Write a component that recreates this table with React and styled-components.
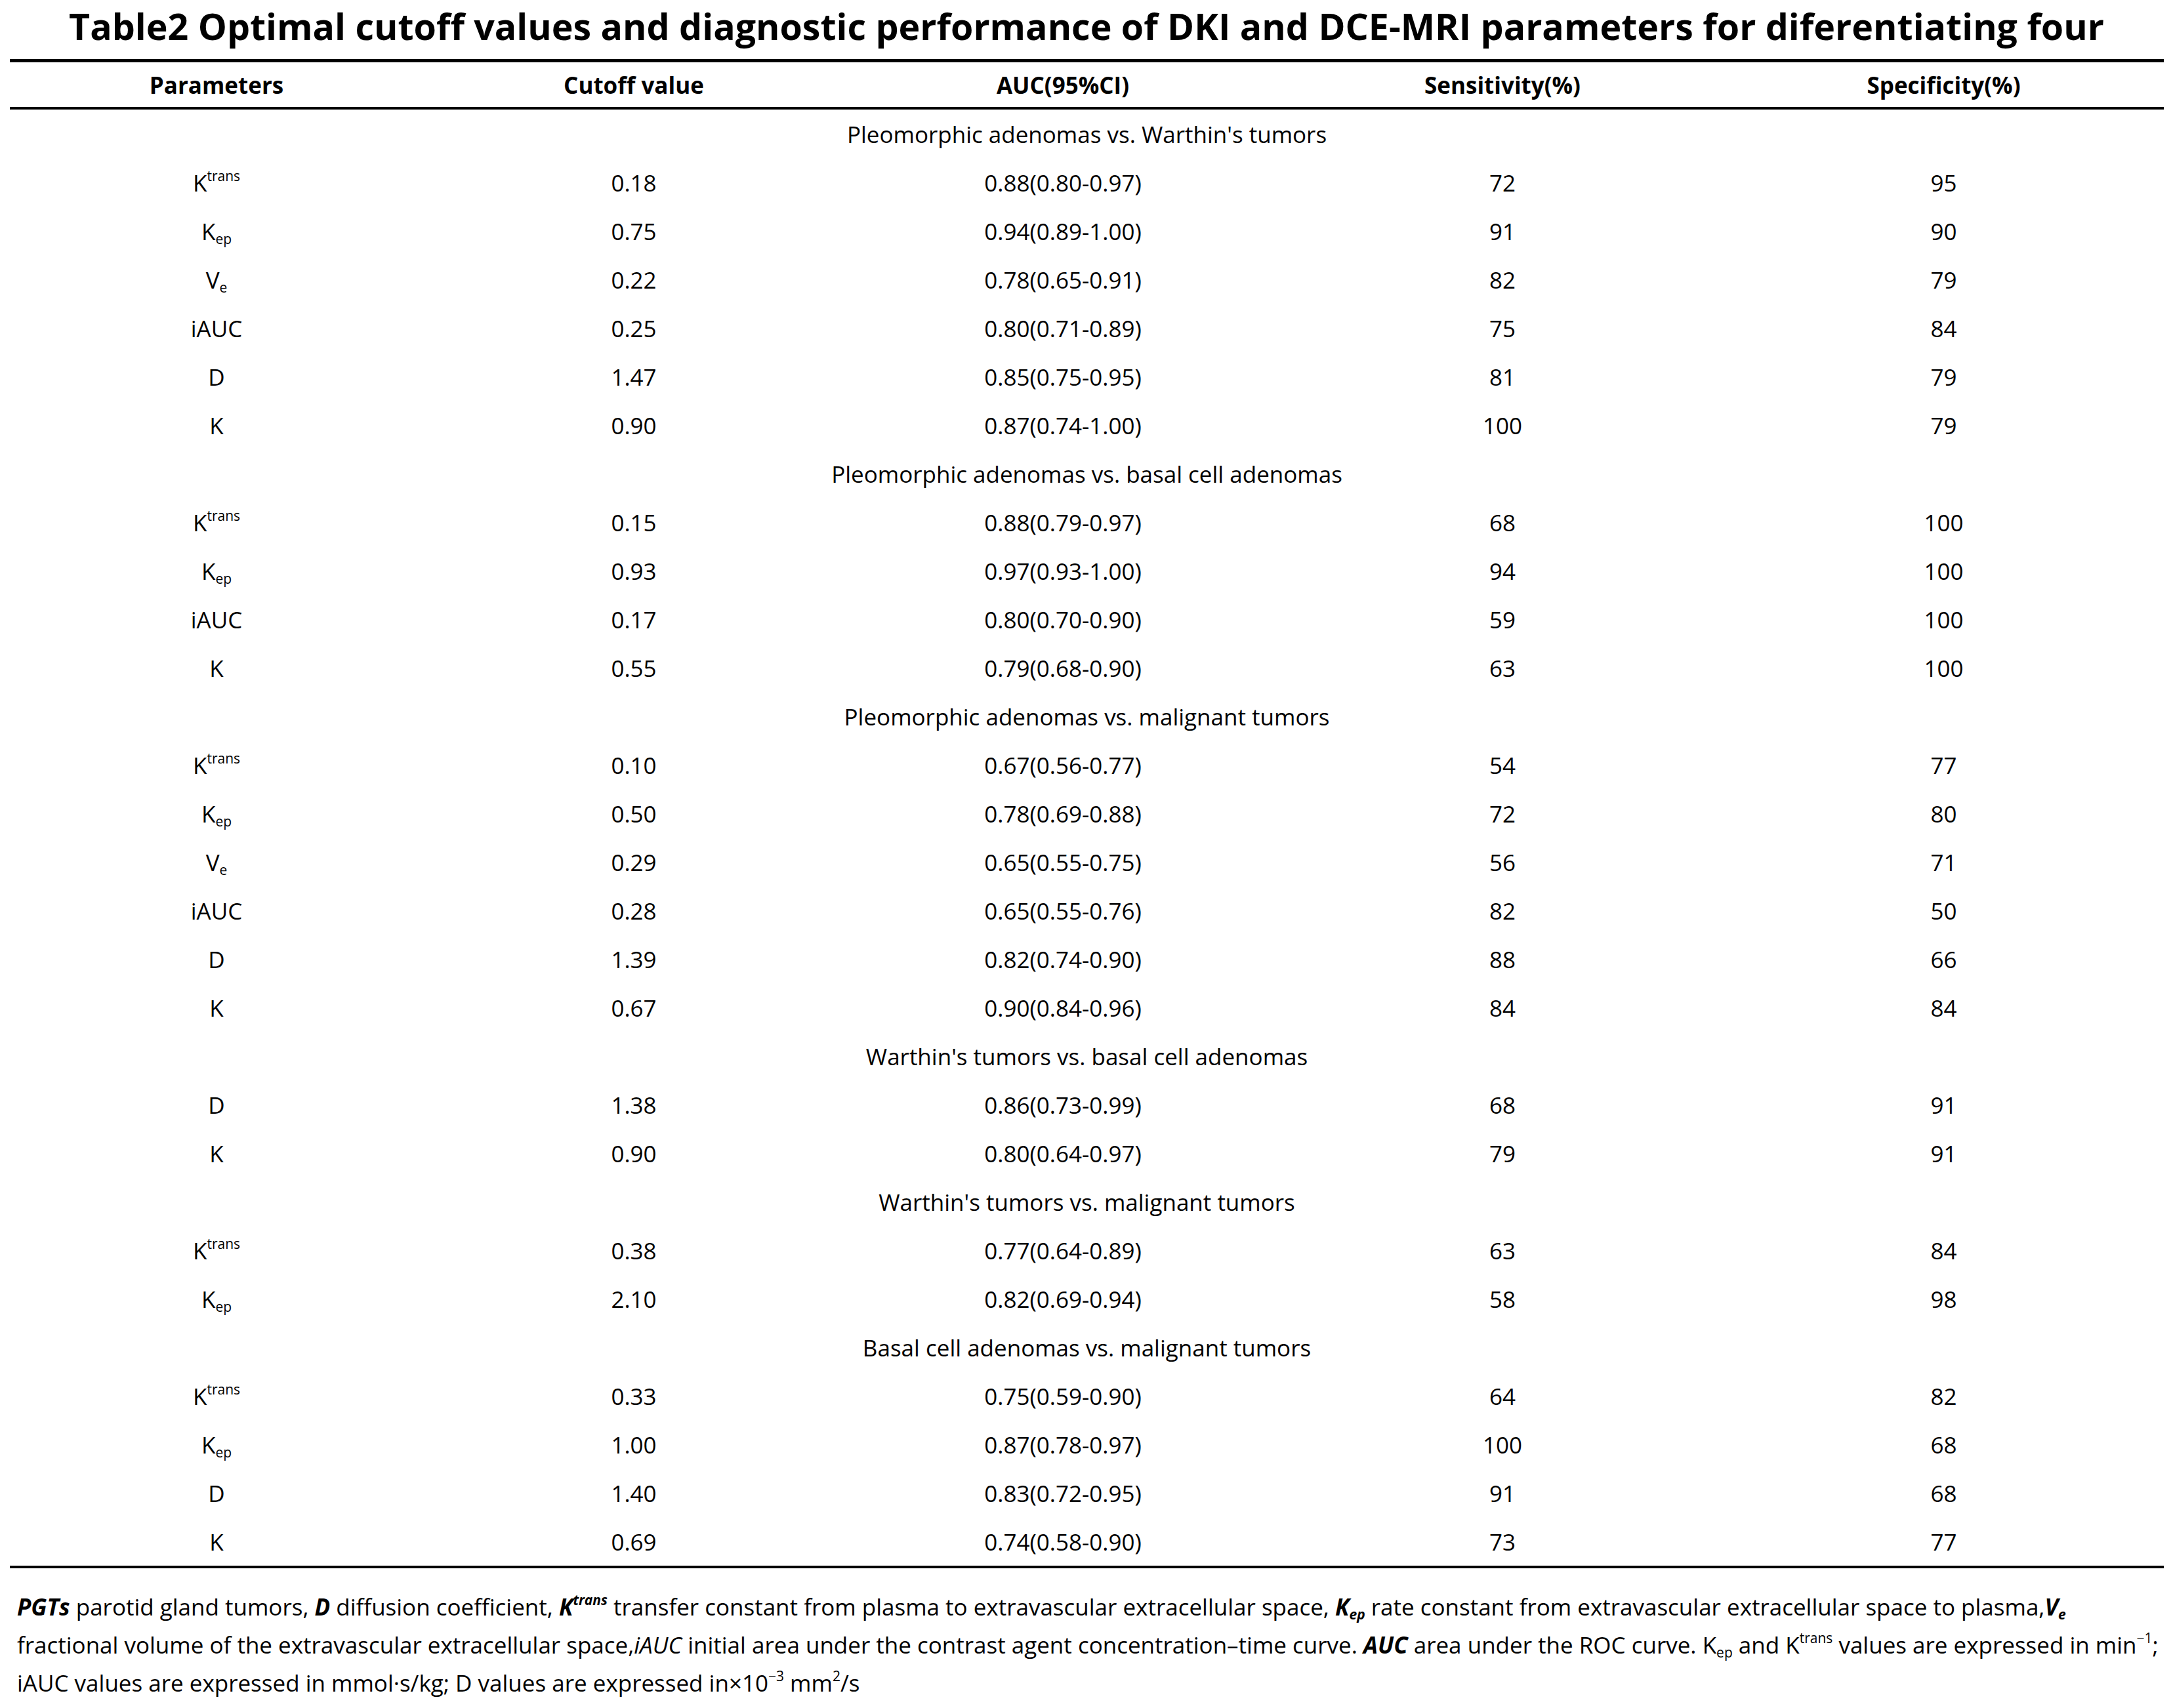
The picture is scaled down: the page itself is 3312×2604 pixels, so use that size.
import React from "react";
import styled, { createGlobalStyle } from "styled-components";

const GlobalStyle = createGlobalStyle`
  html, body {
    margin: 0;
    padding: 0;
    background: #fff;
  }
  body {
    font-family: "Open Sans", "Noto Sans", "Liberation Sans", sans-serif;
    color: #000;
  }
`;

const Page = styled.div`
  width: 3312px;
  min-height: 2604px;
  background: #fff;
`;

const Title = styled.h1`
  margin: 0;
  padding-bottom: 10px;
  font-size: 55.5px;
  line-height: 80px;
  font-weight: 700;
  text-align: center;
  white-space: nowrap;
`;

const Table = styled.div`
  margin-left: 15px;
  width: 3283px;
  display: grid;
  grid-template-columns: 630px 642px 666px 674px 671px;
  border-top: 5px solid #000;
  border-bottom: 4px solid #000;
  font-size: 35px;
`;

const HeadCell = styled.div`
  height: 72px;
  box-sizing: border-box;
  border-bottom: 4px solid #000;
  display: flex;
  align-items: center;
  justify-content: center;
  font-weight: 700;
`;

const Cell = styled.div`
  height: 74px;
  display: flex;
  align-items: center;
  justify-content: center;
  white-space: nowrap;
`;

const SectionCell = styled(Cell)`
  grid-column: 1 / -1;
`;

const Label = styled.span`
  display: inline-block;
`;

const Sup = styled.span`
  font-size: ${(p) => p.$size || 21}px;
  vertical-align: ${(p) => p.$rise || 16}px;
  line-height: 0;
`;

const Sub = styled.span`
  font-size: ${(p) => p.$size || 21}px;
  vertical-align: ${(p) => p.$drop || -6}px;
  line-height: 0;
`;

const Footnote = styled.div`
  margin: 30px 0 0 26px;
  font-size: 35px;
  line-height: 58px;
`;

const NoteLine = styled.div`
  white-space: nowrap;
`;

const Term = styled.b`
  font-weight: 700;
  font-style: italic;
`;

const Em = styled.i`
  font-style: italic;
`;

const params = {
  Ktrans: (
    <>
      K<Sup>trans</Sup>
    </>
  ),
  Kep: (
    <>
      K<Sub>ep</Sub>
    </>
  ),
  Ve: (
    <>
      V<Sub>e</Sub>
    </>
  ),
  iAUC: "iAUC",
  D: "D",
  K: "K",
};

const sections = [
  {
    title: "Pleomorphic adenomas vs. Warthin's tumors",
    rows: [
      ["Ktrans", "0.18", "0.88(0.80-0.97)", "72", "95"],
      ["Kep", "0.75", "0.94(0.89-1.00)", "91", "90"],
      ["Ve", "0.22", "0.78(0.65-0.91)", "82", "79"],
      ["iAUC", "0.25", "0.80(0.71-0.89)", "75", "84"],
      ["D", "1.47", "0.85(0.75-0.95)", "81", "79"],
      ["K", "0.90", "0.87(0.74-1.00)", "100", "79"],
    ],
  },
  {
    title: "Pleomorphic adenomas vs. basal cell adenomas",
    rows: [
      ["Ktrans", "0.15", "0.88(0.79-0.97)", "68", "100"],
      ["Kep", "0.93", "0.97(0.93-1.00)", "94", "100"],
      ["iAUC", "0.17", "0.80(0.70-0.90)", "59", "100"],
      ["K", "0.55", "0.79(0.68-0.90)", "63", "100"],
    ],
  },
  {
    title: "Pleomorphic adenomas vs. malignant tumors",
    rows: [
      ["Ktrans", "0.10", "0.67(0.56-0.77)", "54", "77"],
      ["Kep", "0.50", "0.78(0.69-0.88)", "72", "80"],
      ["Ve", "0.29", "0.65(0.55-0.75)", "56", "71"],
      ["iAUC", "0.28", "0.65(0.55-0.76)", "82", "50"],
      ["D", "1.39", "0.82(0.74-0.90)", "88", "66"],
      ["K", "0.67", "0.90(0.84-0.96)", "84", "84"],
    ],
  },
  {
    title: "Warthin's tumors vs. basal cell adenomas",
    rows: [
      ["D", "1.38", "0.86(0.73-0.99)", "68", "91"],
      ["K", "0.90", "0.80(0.64-0.97)", "79", "91"],
    ],
  },
  {
    title: "Warthin's tumors vs. malignant tumors",
    rows: [
      ["Ktrans", "0.38", "0.77(0.64-0.89)", "63", "84"],
      ["Kep", "2.10", "0.82(0.69-0.94)", "58", "98"],
    ],
  },
  {
    title: "Basal cell adenomas vs. malignant tumors",
    rows: [
      ["Ktrans", "0.33", "0.75(0.59-0.90)", "64", "82"],
      ["Kep", "1.00", "0.87(0.78-0.97)", "100", "68"],
      ["D", "1.40", "0.83(0.72-0.95)", "91", "68"],
      ["K", "0.69", "0.74(0.58-0.90)", "73", "77"],
    ],
  },
];

const headers = [
  "Parameters",
  "Cutoff value",
  "AUC(95%CI)",
  "Sensitivity(%)",
  "Specificity(%)",
];

const App = () => {
  return (
    <>
      <GlobalStyle />
      <Page>
        <Title>
          Table2 Optimal cutoff values and diagnostic performance of DKI and
          DCE-MRI parameters for diferentiating four
        </Title>

        <Table>
          {headers.map((h) => (
            <HeadCell key={h}>{h}</HeadCell>
          ))}
          {sections.map((section) => (
            <React.Fragment key={section.title}>
              <SectionCell>{section.title}</SectionCell>
              {section.rows.map((row, i) => (
                <React.Fragment key={section.title + i}>
                  <Cell>
                    <Label>{params[row[0]]}</Label>
                  </Cell>
                  <Cell>{row[1]}</Cell>
                  <Cell>{row[2]}</Cell>
                  <Cell>{row[3]}</Cell>
                  <Cell>{row[4]}</Cell>
                </React.Fragment>
              ))}
            </React.Fragment>
          ))}
        </Table>

        <Footnote>
          <NoteLine>
            <Term>PGTs</Term> parotid gland tumors, <Term>D</Term> diffusion
            coefficient,{" "}
            <Term>
              K<Sup as="i">trans</Sup>
            </Term>{" "}
            transfer constant from plasma to extravascular extracellular space,{" "}
            <Term>
              K<Sub>ep</Sub>
            </Term>{" "}
            rate constant from extravascular extracellular space to plasma,
            <Term>
              V<Sub>e</Sub>
            </Term>
          </NoteLine>
          <NoteLine>
            fractional volume of the extravascular extracellular space,
            <Em>iAUC</Em> initial area under the contrast agent
            concentration–time curve. <Term>AUC</Term> area under the ROC curve.
            K<Sub>ep</Sub> and K<Sup>trans</Sup> values are expressed in min
            <Sup>−1</Sup>;
          </NoteLine>
          <NoteLine>
            iAUC values are expressed in mmol·s/kg; D values are expressed in×10
            <Sup>−3</Sup> mm<Sup>2</Sup>/s
          </NoteLine>
        </Footnote>
      </Page>
    </>
  );
};

export default App;
